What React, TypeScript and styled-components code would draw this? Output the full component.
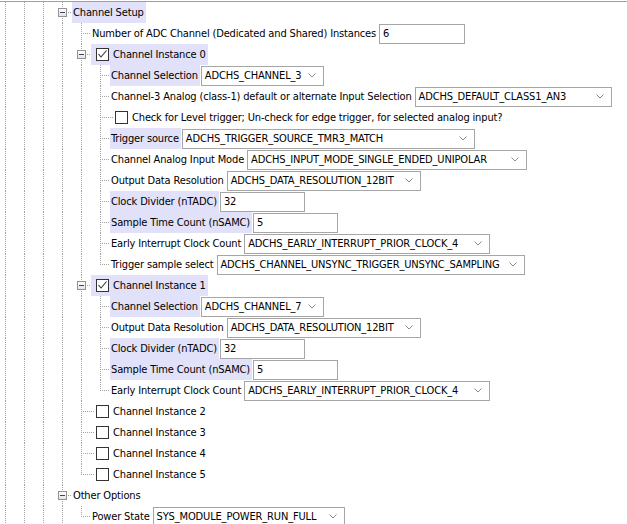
import React from 'react';
import styled, { createGlobalStyle, css } from 'styled-components';

const GlobalStyle = createGlobalStyle`
  html, body { margin: 0; padding: 0; background: #ffffff; }
  body {
    font-family: "DejaVu Sans Condensed", "DejaVu Sans", Tahoma, sans-serif;
    font-stretch: condensed;
    font-size: 11px;
    letter-spacing: -0.15px;
    color: #000000;
  }
`;

const LINE = '#a3a3a3';
const vDots = `repeating-linear-gradient(to bottom, ${LINE} 0 1px, transparent 1px 2px)`;
const hDots = `repeating-linear-gradient(to right, ${LINE} 0 1px, transparent 1px 2px)`;
const HL = '#e1e1f9';

type GuideKind = 'none' | 'pass' | 'tee' | 'elbow';

const Panel = styled.div`
  border-top: 1px solid #a0a0a0;
  margin-top: 1px;
  height: 522px;
  overflow: hidden;
`;

const Tree = styled.div`
  display: flex;
  flex-direction: column;
  margin-left: -4px;
`;

const Row = styled.div`
  display: flex;
  align-items: center;
  height: 21px;
  white-space: nowrap;
`;

const Guide = styled.div<{ $kind: GuideKind }>`
  flex: 0 0 19px;
  align-self: stretch;
  display: flex;
  align-items: center;
  justify-content: center;
  background-repeat: no-repeat;
  ${({ $kind }) =>
    $kind === 'pass' &&
    css`
      background-image: ${vDots};
      background-size: 1px 100%;
      background-position: 9px 0;
    `}
  ${({ $kind }) =>
    $kind === 'tee' &&
    css`
      background-image: ${vDots}, ${hDots};
      background-size: 1px 100%, 10px 1px;
      background-position: 9px 0, 9px 10px;
    `}
  ${({ $kind }) =>
    $kind === 'elbow' &&
    css`
      background-image: ${vDots}, ${hDots};
      background-size: 1px 11px, 10px 1px;
      background-position: 9px 0, 9px 10px;
    `}
`;

const Expander = styled.span`
  width: 9px;
  height: 9px;
  box-sizing: border-box;
  border: 1px solid #929292;
  background: linear-gradient(#ffffff, #e4e4e4);
  display: flex;
  align-items: center;
  justify-content: center;
`;

const Minus = styled.span`
  width: 5px;
  height: 1px;
  background: #3a4660;
`;

const Label = styled.span<{ $hl?: boolean }>`
  align-self: stretch;
  display: flex;
  align-items: center;
  padding: 0 2px 0 1px;
  background: ${({ $hl }) => ($hl ? HL : 'transparent')};
`;

const CheckNode = styled.span<{ $hl?: boolean }>`
  align-self: stretch;
  display: flex;
  align-items: center;
  gap: 4px;
  padding: 0 2px 0 5px;
  background-repeat: no-repeat;
  ${({ $hl }) =>
    $hl
      ? css`
          background-color: ${HL};
        `
      : css`
          background-image: ${hDots};
          background-size: 4px 1px;
          background-position: 0 10px;
        `}
`;

const Box = styled.span`
  width: 13px;
  height: 13px;
  box-sizing: border-box;
  border: 1px solid #333333;
  background: #ffffff;
  display: flex;
  align-items: center;
  justify-content: center;
`;

const Field = styled.span<{ $w: number }>`
  width: ${({ $w }) => $w}px;
  height: 20px;
  box-sizing: border-box;
  margin-left: 1px;
  border: 1px solid #a6a6a6;
  background: #ffffff;
  display: flex;
  align-items: center;
  justify-content: space-between;
  padding: 0 7px 0 3px;
`;

const Chevron = () => (
  <svg width="8" height="5" viewBox="0 0 8 5">
    <polyline points="0.5,0.5 4,4 7.5,0.5" fill="none" stroke="#8a8a8a" strokeWidth="1" />
  </svg>
);

const Tick = () => (
  <svg width="11" height="11" viewBox="0 0 11 11">
    <polyline points="1.5,5 4,8 9.5,1.5" fill="none" stroke="#333" strokeWidth="1.1" />
  </svg>
);

const CheckItem: React.FC<{ checked?: boolean; hl?: boolean; children: React.ReactNode }> = ({
  checked,
  hl,
  children,
}) => (
  <CheckNode $hl={hl}>
    <Box>{checked && <Tick />}</Box>
    {children}
  </CheckNode>
);

const Select: React.FC<{ w: number; value: string }> = ({ w, value }) => (
  <Field $w={w}>
    <span>{value}</span>
    <Chevron />
  </Field>
);

const Input: React.FC<{ w: number; value: string }> = ({ w, value }) => (
  <Field $w={w}>
    <span>{value}</span>
  </Field>
);

const TreeRow: React.FC<{ g: string; children?: React.ReactNode }> = ({ g, children }) => {
  // g: '|' pass, '+' tee, 'L' elbow, 'E' tee with expander, ' ' none
  const cells = g.split('').map((c, i) => {
    const kind: GuideKind = c === '|' ? 'pass' : c === '+' || c === 'E' ? 'tee' : c === 'L' ? 'elbow' : 'none';
    return (
      <Guide key={i} $kind={kind}>
        {c === 'E' && (
          <Expander>
            <Minus />
          </Expander>
        )}
      </Guide>
    );
  });
  return (
    <Row>
      {cells}
      {children}
    </Row>
  );
};

export default function App() {
  return (
    <>
      <GlobalStyle />
      <Panel>
        <Tree>
          <TreeRow g="|||E">
            <Label $hl>Channel Setup</Label>
          </TreeRow>
          <TreeRow g="||||+">
            <Label>Number of ADC Channel (Dedicated and Shared) Instances</Label>
            <Input w={86} value="6" />
          </TreeRow>
          <TreeRow g="||||E">
            <CheckItem checked hl>
              Channel Instance 0
            </CheckItem>
          </TreeRow>
          <TreeRow g="|||||+">
            <Label $hl>Channel Selection</Label>
            <Select w={123} value="ADCHS_CHANNEL_3" />
          </TreeRow>
          <TreeRow g="|||||+">
            <Label>Channel-3 Analog (class-1) default or alternate Input Selection</Label>
            <Select w={197} value="ADCHS_DEFAULT_CLASS1_AN3" />
          </TreeRow>
          <TreeRow g="|||||+">
            <CheckItem>Check for Level trigger; Un-check for edge trigger, for selected analog input?</CheckItem>
          </TreeRow>
          <TreeRow g="|||||+">
            <Label $hl>Trigger source</Label>
            <Select w={293} value="ADCHS_TRIGGER_SOURCE_TMR3_MATCH" />
          </TreeRow>
          <TreeRow g="|||||+">
            <Label>Channel Analog Input Mode</Label>
            <Select w={280} value="ADCHS_INPUT_MODE_SINGLE_ENDED_UNIPOLAR" />
          </TreeRow>
          <TreeRow g="|||||+">
            <Label>Output Data Resolution</Label>
            <Select w={194} value="ADCHS_DATA_RESOLUTION_12BIT" />
          </TreeRow>
          <TreeRow g="|||||+">
            <Label $hl>Clock Divider (nTADC)</Label>
            <Input w={85} value="32" />
          </TreeRow>
          <TreeRow g="|||||+">
            <Label $hl>Sample Time Count (nSAMC)</Label>
            <Input w={85} value="5" />
          </TreeRow>
          <TreeRow g="|||||+">
            <Label>Early Interrupt Clock Count</Label>
            <Select w={246} value="ADCHS_EARLY_INTERRUPT_PRIOR_CLOCK_4" />
          </TreeRow>
          <TreeRow g="|||||L">
            <Label>Trigger sample select</Label>
            <Select w={308} value="ADCHS_CHANNEL_UNSYNC_TRIGGER_UNSYNC_SAMPLING" />
          </TreeRow>
          <TreeRow g="||||E">
            <CheckItem checked hl>
              Channel Instance 1
            </CheckItem>
          </TreeRow>
          <TreeRow g="|||||+">
            <Label $hl>Channel Selection</Label>
            <Select w={123} value="ADCHS_CHANNEL_7" />
          </TreeRow>
          <TreeRow g="|||||+">
            <Label>Output Data Resolution</Label>
            <Select w={194} value="ADCHS_DATA_RESOLUTION_12BIT" />
          </TreeRow>
          <TreeRow g="|||||+">
            <Label $hl>Clock Divider (nTADC)</Label>
            <Input w={85} value="32" />
          </TreeRow>
          <TreeRow g="|||||+">
            <Label $hl>Sample Time Count (nSAMC)</Label>
            <Input w={85} value="5" />
          </TreeRow>
          <TreeRow g="|||||L">
            <Label>Early Interrupt Clock Count</Label>
            <Select w={246} value="ADCHS_EARLY_INTERRUPT_PRIOR_CLOCK_4" />
          </TreeRow>
          <TreeRow g="||||+">
            <CheckItem>Channel Instance 2</CheckItem>
          </TreeRow>
          <TreeRow g="||||+">
            <CheckItem>Channel Instance 3</CheckItem>
          </TreeRow>
          <TreeRow g="||||+">
            <CheckItem>Channel Instance 4</CheckItem>
          </TreeRow>
          <TreeRow g="||||L">
            <CheckItem>Channel Instance 5</CheckItem>
          </TreeRow>
          <TreeRow g="|||E">
            <Label>Other Options</Label>
          </TreeRow>
          <TreeRow g="||||L">
            <Label>Power State</Label>
            <Select w={192} value="SYS_MODULE_POWER_RUN_FULL" />
          </TreeRow>
        </Tree>
      </Panel>
    </>
  );
}
